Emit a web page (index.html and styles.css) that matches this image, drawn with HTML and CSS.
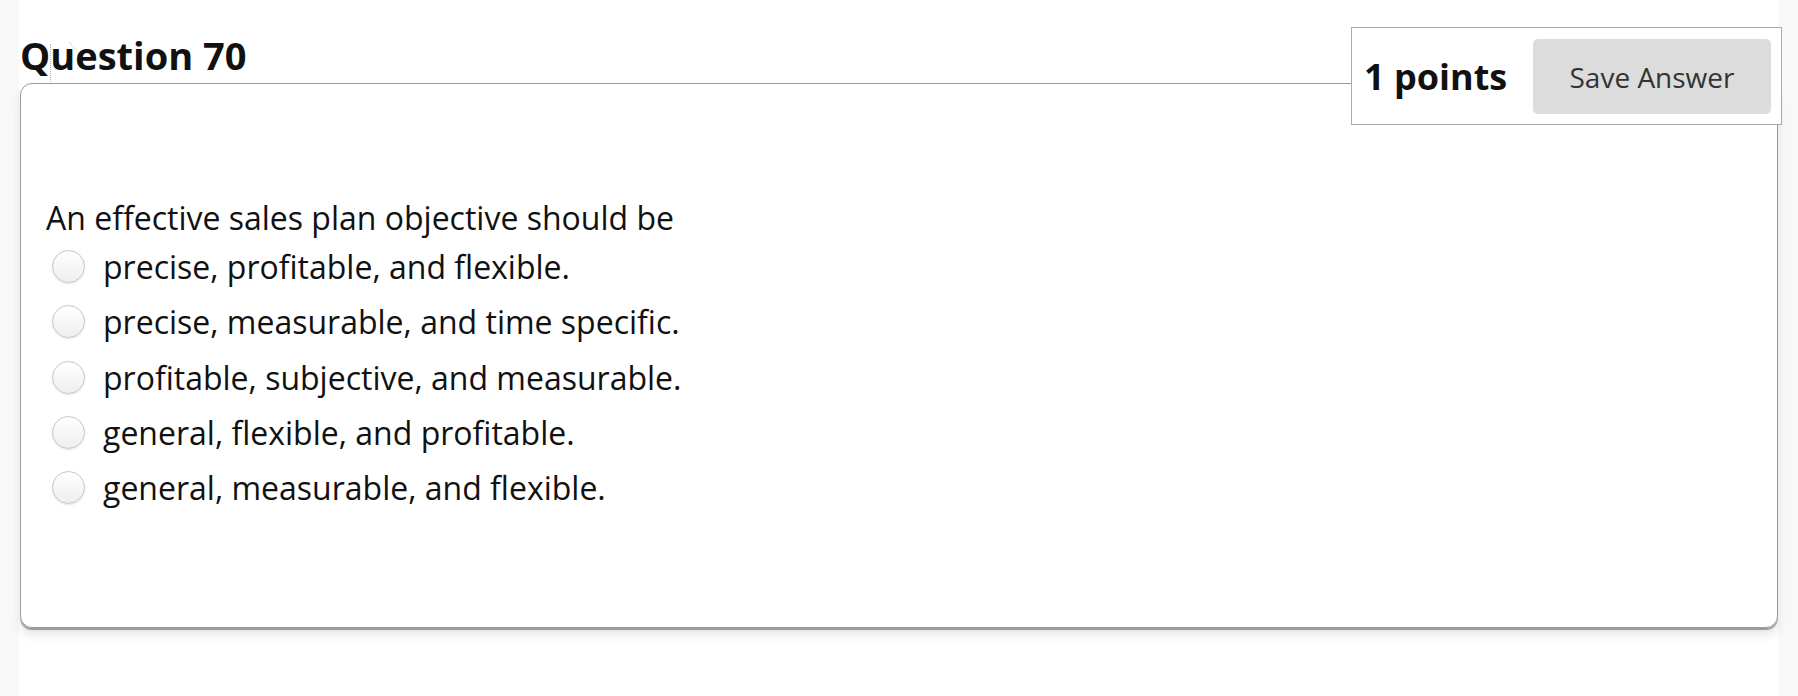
FILE: index.html
```html
<!DOCTYPE html>
<html lang="en">
<head>
<meta charset="utf-8">
<title>Question 70</title>
<link rel="stylesheet" href="styles.css">
</head>
<body>
<div class="page">
  <div class="question">
    <h2 class="title">Question 70</h2>
    <span class="drag-mark" aria-hidden="true"></span>
    <span class="drag-arrow" aria-hidden="true"></span>
    <div class="points-box">
      <span class="points">1 points</span>
      <button class="save-btn" type="button">Save Answer</button>
    </div>
    <div class="card">
      <p class="prompt">An effective sales plan objective should be</p>
      <ul class="options">
        <li class="option"><span class="radio"></span><span class="label">precise, profitable, and flexible.</span></li>
        <li class="option"><span class="radio"></span><span class="label">precise, measurable, and time specific.</span></li>
        <li class="option"><span class="radio"></span><span class="label">profitable, subjective, and measurable.</span></li>
        <li class="option"><span class="radio"></span><span class="label">general, flexible, and profitable.</span></li>
        <li class="option"><span class="radio"></span><span class="label">general, measurable, and flexible.</span></li>
      </ul>
    </div>
  </div>
</div>
</body>
</html>
```

FILE: styles.css
```css
html, body {
  margin: 0;
  padding: 0;
  height: 100%;
}
body {
  background: #f8f8f8;
  font-family: "Open Sans", "Noto Sans", sans-serif;
  color: #111;
  overflow: hidden;
}
.page {
  background: #fff;
  margin: 0 20px 0 19px;
  min-height: 696px;
}
.question {
  position: relative;
  padding-top: 29px;
}
.title {
  margin: 0 0 0 1px;
  font-size: 38px;
  font-weight: 700;
  line-height: 52px;
  height: 54px;
  color: #111;
}
.drag-mark {
  position: absolute;
  left: 31px;
  top: 44px;
  width: 0;
  height: 38px;
  border-left: 1px dotted #b5b5b5;
  z-index: 1;
}
.drag-arrow {
  position: absolute;
  left: 50px;
  top: 42px;
  width: 10px;
  height: 1px;
  border-top: 1px dotted #c8c8c8;
  transform: rotate(45deg);
  transform-origin: left center;
  z-index: 1;
}
.points-box {
  position: absolute;
  top: 27px;
  right: -4px;
  width: 431px;
  height: 98px;
  box-sizing: border-box;
  border: 1px solid #aaa;
  background: #fff;
  display: flex;
  align-items: center;
  justify-content: space-between;
  padding: 0 10px 0 12px;
  z-index: 2;
}
.points {
  font-size: 36px;
  font-weight: 700;
  color: #111;
}
.save-btn {
  width: 238px;
  height: 75px;
  border: none;
  border-radius: 5px;
  background: #dcdcdc;
  font-family: "Open Sans", "Noto Sans", sans-serif;
  font-size: 28px;
  color: #333;
  padding: 0;
  margin-top: 1px;
}
.card {
  margin-left: 1px;
  border: 1px solid #999;
  border-radius: 12px;
  height: 545px;
  box-sizing: border-box;
  padding: 114px 24px 0 25px;
  box-shadow: 0 2px 0 #9c9c9c, 0 7px 10px rgba(0, 0, 0, 0.10);
}
.prompt {
  margin: 0 0 1px;
  font-size: 32px;
  line-height: 40px;
}
.options {
  list-style: none;
  margin: 0;
  padding: 0;
}
.option {
  display: flex;
  align-items: center;
  height: 55.3px;
  font-size: 32px;
}
.radio {
  flex: none;
  box-sizing: border-box;
  width: 33px;
  height: 33px;
  margin-left: 6px;
  margin-right: 18px;
  border-radius: 50%;
  border: 1px solid #c6c6c6;
  background: linear-gradient(#fff, #eeeeee);
  box-shadow: 0 1px 2px rgba(0, 0, 0, 0.10);
}
```
